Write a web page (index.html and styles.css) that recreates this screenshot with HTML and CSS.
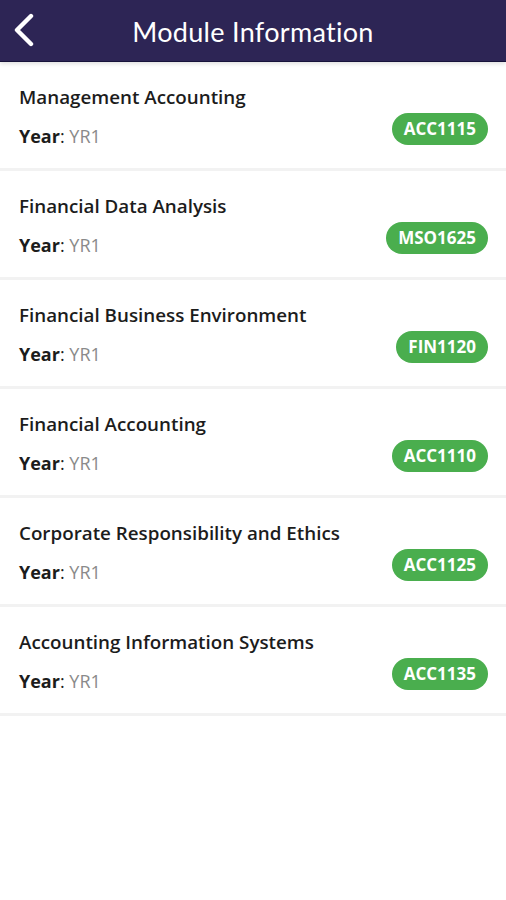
FILE: index.html
```html
<!DOCTYPE html>
<html lang="en">
<head>
  <meta charset="UTF-8">
  <meta name="viewport" content="width=device-width, initial-scale=1.0">
  <title>Module Information</title>
  <link rel="stylesheet" href="styles.css">
</head>
<body>
  <header class="top-bar">
    <a class="back-btn" href="#">
      <svg width="26" height="36" viewBox="0 0 26 36">
        <polyline points="19,3 5,17 19,31" fill="none" stroke="#fff" stroke-width="4.4" stroke-linecap="round" stroke-linejoin="round"/>
      </svg>
    </a>
    <h1>Module Information</h1>
  </header>

  <ul class="module-list">
    <li class="module">
      <div class="module-info">
        <div class="module-name">Management Accounting</div>
        <div class="module-year"><b>Year</b>: <span>YR1</span></div>
      </div>
      <span class="code">ACC1115</span>
    </li>
    <li class="module">
      <div class="module-info">
        <div class="module-name">Financial Data Analysis</div>
        <div class="module-year"><b>Year</b>: <span>YR1</span></div>
      </div>
      <span class="code">MSO1625</span>
    </li>
    <li class="module">
      <div class="module-info">
        <div class="module-name">Financial Business Environment</div>
        <div class="module-year"><b>Year</b>: <span>YR1</span></div>
      </div>
      <span class="code">FIN1120</span>
    </li>
    <li class="module">
      <div class="module-info">
        <div class="module-name">Financial Accounting</div>
        <div class="module-year"><b>Year</b>: <span>YR1</span></div>
      </div>
      <span class="code">ACC1110</span>
    </li>
    <li class="module">
      <div class="module-info">
        <div class="module-name">Corporate Responsibility and Ethics</div>
        <div class="module-year"><b>Year</b>: <span>YR1</span></div>
      </div>
      <span class="code">ACC1125</span>
    </li>
    <li class="module">
      <div class="module-info">
        <div class="module-name">Accounting Information Systems</div>
        <div class="module-year"><b>Year</b>: <span>YR1</span></div>
      </div>
      <span class="code">ACC1135</span>
    </li>
  </ul>
</body>
</html>
```

FILE: styles.css
```css
body {
  margin: 0;
  font-family: "Open Sans", "Noto Sans", sans-serif;
  background-color: #fff;
  color: #1c1c1c;
}
.top-bar {
  display: flex;
  align-items: center;
  height: 61px;
  background-color: #2d2555;
  border-bottom: 1px solid #17123a;
  box-shadow: 0 2px 4px rgba(0, 0, 0, 0.12);
  position: relative;
}
.back-btn {
  display: flex;
  align-items: center;
  padding-left: 12px;
  width: 40px;
}
.top-bar h1 {
  flex: 1;
  margin: 2px 52px 0 0;
  text-align: center;
  color: #fff;
  font-family: "Lato", sans-serif;
  font-size: 27px;
  font-weight: 400;
  letter-spacing: 0.3px;
}
.module-list {
  list-style: none;
  margin: 0;
  padding: 0;
}
.module {
  display: flex;
  align-items: flex-start;
  justify-content: space-between;
  box-sizing: border-box;
  height: 109px;
  padding: 23px 18px 0 19px;
  border-bottom: 3px solid #f2f2f2;
}
.module-name {
  font-size: 18.8px;
  line-height: 24px;
  font-weight: 600;
  margin-bottom: 15px;
}
.module-year {
  font-size: 18px;
  line-height: 24px;
}
.module-year b {
  font-weight: 700;
}
.module-year span {
  color: #8a8a8a;
}
.code {
  background-color: #4aae4e;
  color: #fff;
  font-size: 17px;
  line-height: 22px;
  font-weight: 700;
  padding: 5px 12px;
  border-radius: 16px;
  margin-top: 28px;
}
```
